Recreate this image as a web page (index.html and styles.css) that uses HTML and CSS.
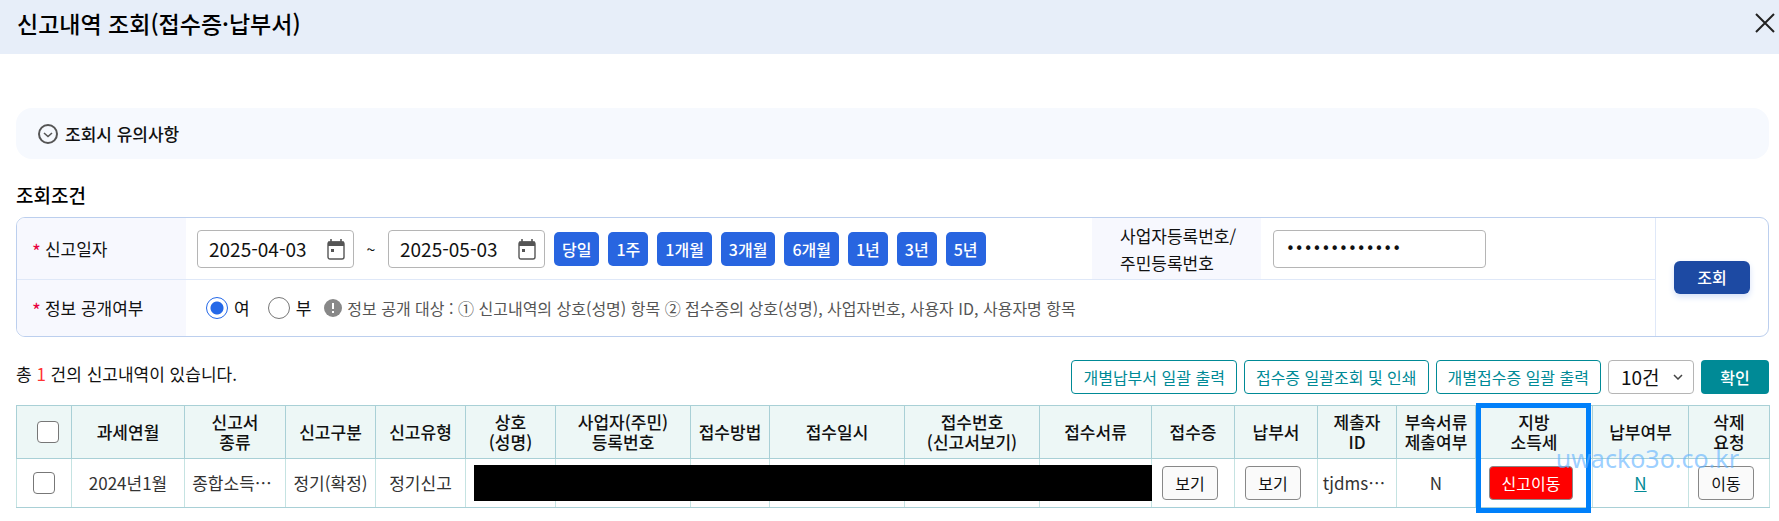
FILE: index.html
```html
<!DOCTYPE html>
<html lang="ko">
<head>
  <meta charset="UTF-8">
  <meta name="viewport" content="width=device-width, initial-scale=1.0">
  <title>신고내역 조회(접수증·납부서)</title>
  <link rel="stylesheet" href="styles.css">
</head>
<body>
  <header class="popup-header">
    <h1>신고내역 조회(접수증·납부서)</h1>
    <button type="button" class="close" aria-label="닫기">
      <svg width="20" height="20" viewBox="0 0 20 20"><path d="M1 1L19 19M19 1L1 19" fill="none" stroke="#222" stroke-width="2"/></svg>
    </button>
  </header>

  <main class="content">
    <button type="button" class="notice">
      <svg width="20" height="20" viewBox="0 0 20 20" fill="none" stroke="#555" stroke-width="2"><circle cx="10" cy="10" r="9"/><path d="M6 9l4 3.5L14 9" stroke-width="1.6"/></svg>
      조회시 유의사항
    </button>

    <h2>조회조건</h2>
    <form class="search">
      <div class="search-rows">
        <div class="search-row">
          <label class="search-label" for="dateFrom"><span class="required">*</span>신고일자</label>
          <div class="search-field">
            <div class="date">
              <input type="text" id="dateFrom" value="2025-04-03">
              <button type="button" aria-label="시작일 선택">
                <svg width="18" height="21" viewBox="0 0 18 21"><path d="M4 0v4M14 0v4" stroke="#555" stroke-width="1.6"/><rect x="1" y="3" width="16" height="17" rx="2" fill="none" stroke="#555" stroke-width="1.4"/><path d="M1 2.5h16V7H1z" fill="#555"/><path d="M4 10h3v3H4z" fill="#555"/></svg>
              </button>
            </div>
            <span class="tilde">~</span>
            <div class="date">
              <input type="text" id="dateTo" value="2025-05-03" aria-label="종료일">
              <button type="button" aria-label="종료일 선택">
                <svg width="18" height="21" viewBox="0 0 18 21"><path d="M4 0v4M14 0v4" stroke="#555" stroke-width="1.6"/><rect x="1" y="3" width="16" height="17" rx="2" fill="none" stroke="#555" stroke-width="1.4"/><path d="M1 2.5h16V7H1z" fill="#555"/><path d="M4 10h3v3H4z" fill="#555"/></svg>
              </button>
            </div>
            <div class="periods">
              <button type="button">당일</button>
              <button type="button">1주</button>
              <button type="button">1개월</button>
              <button type="button">3개월</button>
              <button type="button">6개월</button>
              <button type="button">1년</button>
              <button type="button">3년</button>
              <button type="button">5년</button>
            </div>
          </div>
          <label class="search-label number-label" for="bizNo">사업자등록번호/<br>주민등록번호</label>
          <div class="number-field">
            <input type="password" id="bizNo" value="1234567890123">
          </div>
        </div>
        <div class="search-row">
          <div class="search-label" id="openLabel"><span class="required">*</span>정보 공개여부</div>
          <div class="search-field open-field" role="radiogroup" aria-labelledby="openLabel">
            <label class="radio"><input type="radio" name="open" checked>여</label>
            <label class="radio"><input type="radio" name="open">부</label>
            <p class="info">
              <svg width="18" height="18" viewBox="0 0 18 18"><circle cx="9" cy="9" r="9" fill="#888"/><path d="M8 4h2v6H8zM8 12h2v2H8z" fill="#fff"/></svg>
              정보 공개 대상 : ① 신고내역의 상호(성명) 항목 ② 접수증의 상호(성명), 사업자번호, 사용자 ID, 사용자명 항목
            </p>
          </div>
        </div>
      </div>
      <div class="search-submit">
        <button type="button">조회</button>
      </div>
    </form>

    <div class="toolbar">
      <p class="total">총 <span>1</span> 건의 신고내역이 있습니다.</p>
      <div class="actions">
        <button type="button" class="outline">개별납부서 일괄 출력</button>
        <button type="button" class="outline">접수증 일괄조회 및 인쇄</button>
        <button type="button" class="outline">개별접수증 일괄 출력</button>
        <div class="page-size">
          <select aria-label="페이지당 건수">
            <option>10건</option>
            <option>30건</option>
            <option>50건</option>
          </select>
          <svg width="10" height="6" viewBox="0 0 10 6"><path d="M1 1l4 4 4-4" fill="none" stroke="#444" stroke-width="1.5"/></svg>
        </div>
        <button type="button" class="confirm">확인</button>
      </div>
    </div>

    <div class="result">
      <table>
        <colgroup>
          <col class="w-check"><col class="w-month"><col class="w-kind"><col class="w-type"><col class="w-type"><col class="w-type">
          <col class="w-wide"><col class="w-small"><col class="w-wide"><col class="w-wide"><col class="w-doc"><col class="w-view"><col class="w-view">
          <col class="w-small"><col class="w-small"><col class="w-local"><col class="w-paid"><col class="w-delete">
        </colgroup>
        <thead>
          <tr>
            <th class="check-all"><input type="checkbox" aria-label="전체 선택"></th>
            <th>과세연월</th>
            <th>신고서<br>종류</th>
            <th>신고구분</th>
            <th>신고유형</th>
            <th>상호<br>(성명)</th>
            <th>사업자(주민)<br>등록번호</th>
            <th>접수방법</th>
            <th>접수일시</th>
            <th>접수번호<br>(신고서보기)</th>
            <th>접수서류</th>
            <th>접수증</th>
            <th>납부서</th>
            <th>제출자<br>ID</th>
            <th>부속서류<br>제출여부</th>
            <th>지방<br>소득세</th>
            <th>납부여부</th>
            <th>삭제<br>요청</th>
          </tr>
        </thead>
        <tbody>
          <tr>
            <td><input type="checkbox" aria-label="선택"></td>
            <td>2024년1월</td>
            <td class="tight">종합소득⋯</td>
            <td>정기(확정)</td>
            <td>정기신고</td>
            <td></td>
            <td></td>
            <td></td>
            <td></td>
            <td></td>
            <td></td>
            <td class="tight"><button type="button" class="cell-btn">보기</button></td>
            <td class="tight"><button type="button" class="cell-btn">보기</button></td>
            <td class="tight">tjdms⋯</td>
            <td>N</td>
            <td class="tight"><button type="button" class="cell-btn move">신고이동</button></td>
            <td><a href="#">N</a></td>
            <td class="tight"><button type="button" class="cell-btn">이동</button></td>
          </tr>
        </tbody>
      </table>
      <div class="mask"></div>
      <div class="highlight"></div>
      <div class="watermark">uwacko3o.co.kr</div>
    </div>
  </main>
</body>
</html>
```

FILE: styles.css
```css
* {
  box-sizing: border-box;
}
body {
  margin: 0;
  font-family: "Noto Sans CJK KR", sans-serif;
  font-size: 16px;
  line-height: 20px;
  color: #111;
  background: #fff;
}
h1, h2, p {
  margin: 0;
}
button, input, select {
  font: inherit;
  color: inherit;
  margin: 0;
}
button {
  cursor: pointer;
}
svg {
  display: block;
  flex: none;
}

.popup-header {
  display: flex;
  justify-content: space-between;
  align-items: center;
  height: 54px;
  padding: 0 4px 8px 17px;
  background: #e7eef9;
}
h1 {
  font-size: 23px;
  font-weight: 500;
  line-height: 32px;
  color: #000;
}
.close {
  padding: 0;
  border: 0;
  background: none;
}

.content {
  padding: 54px 10px 12px 16px;
}
.notice {
  display: flex;
  align-items: center;
  gap: 7px;
  width: 100%;
  height: 51px;
  padding: 0 22px;
  border: 0;
  border-radius: 16px;
  background: #f6f9fe;
  font-size: 17px;
  font-weight: 500;
}
h2 {
  margin: 24px 0 10px;
  font-size: 19px;
  font-weight: 500;
  line-height: 24px;
  color: #000;
}

/* search panel */
.search {
  display: flex;
  border: 1px solid #bccfee;
  border-radius: 9px;
  overflow: hidden;
}
.search-rows {
  flex: 1;
  border-right: 1px solid #dfe8f8;
}
.search-row {
  display: flex;
  height: 61px;
}
.search-row + .search-row {
  height: 57px;
  border-top: 1px solid #dfe8f8;
}
.search-label {
  display: flex;
  align-items: center;
  gap: 4px;
  width: 169px;
  padding-left: 15px;
  background: #f7f8fe;
  font-size: 17px;
}
.required {
  padding-top: 4px;
  font-size: 19px;
  color: #e8003d;
}
.search-field {
  display: flex;
  flex: 1;
  align-items: center;
  padding-left: 11px;
}
.date {
  position: relative;
}
.date input {
  display: block;
  width: 157px;
  height: 38px;
  padding: 0 40px 0 11px;
  border: 1px solid #b5b5b5;
  border-radius: 4px;
  font-size: 19px;
}
.date button {
  position: absolute;
  top: 9px;
  right: 9px;
  padding: 0;
  border: 0;
  background: none;
}
.tilde {
  width: 34px;
  text-align: center;
}
.periods {
  display: flex;
  gap: 9px;
  margin-left: 9px;
}
.periods button {
  height: 34px;
  padding: 0 8px;
  border: 0;
  border-radius: 5px;
  background: #2865e0;
  color: #fff;
  font-weight: 500;
}
.number-label {
  padding-left: 28px;
  line-height: 27px;
}
.number-field {
  display: flex;
  align-items: center;
  width: 394px;
  padding-left: 12px;
}
.number-field input {
  width: 213px;
  height: 38px;
  padding: 0 12px;
  border: 1px solid #b5b5b5;
  border-radius: 4px;
  font-family: "DejaVu Sans", sans-serif;
  font-size: 15px;
}
.open-field {
  padding-left: 20px;
}
.radio {
  display: flex;
  align-items: center;
  gap: 6px;
  margin-right: 18px;
  font-size: 17px;
}
.radio input {
  appearance: none;
  width: 22px;
  height: 22px;
  border: 1px solid #777;
  border-radius: 50%;
  background: #fff;
}
.radio input:checked {
  border-color: #2468e8;
  background: radial-gradient(circle, #2468e8 6px, #fff 7px);
}
.radio + .info {
  margin-left: -5px;
}
.info {
  display: flex;
  align-items: center;
  gap: 5px;
  color: #555;
}
.search-submit {
  display: flex;
  align-items: center;
  justify-content: center;
  width: 112px;
}
.search-submit button {
  width: 76px;
  height: 33px;
  padding: 0;
  border: 0;
  border-radius: 6px;
  background: #1d4aa3;
  color: #fff;
  font-weight: 500;
  box-shadow: 0 3px 6px #d5e0f8;
}

/* result toolbar */
.toolbar {
  display: flex;
  justify-content: space-between;
  margin: 23px 0 11px;
}
.total {
  padding-top: 4px;
  font-size: 17px;
}
.total span {
  color: #f33;
}
.actions {
  display: flex;
  gap: 7px;
}
.outline {
  height: 34px;
  padding: 0 11px;
  border: 1px solid #008a96;
  border-radius: 4px;
  background: #fff;
  color: #008a96;
}
.page-size {
  position: relative;
}
.page-size select {
  appearance: none;
  width: 86px;
  height: 34px;
  padding: 0 12px;
  border: 1px solid #b5b5b5;
  border-radius: 4px;
  background: #fff;
  font-size: 19px;
}
.page-size svg {
  position: absolute;
  top: 14px;
  right: 11px;
  pointer-events: none;
}
.confirm {
  width: 68px;
  height: 34px;
  padding: 0;
  border: 0;
  border-radius: 4px;
  background: #008a96;
  color: #fff;
  font-weight: 500;
}

/* result table */
.result {
  position: relative;
}
table {
  width: 100%;
  table-layout: fixed;
  border-collapse: collapse;
  border: 1px solid #a9d0d6;
  font-size: 17px;
  text-align: center;
}
th {
  height: 53px;
  padding: 0;
  border: 1px solid #a9d0d6;
  background: #edf7f6;
  font-weight: 500;
  white-space: nowrap;
}
td {
  height: 49px;
  padding: 0;
  border: 1px solid #c5e3e2;
  border-bottom-color: #a9d0d6;
  color: #333;
  white-space: nowrap;
}
.tight {
  padding-right: 6px;
}
.w-check { width: 55px; }
.w-month { width: 113px; }
.w-kind { width: 101px; }
.w-type { width: 90px; }
.w-wide { width: 135px; }
.w-small { width: 79px; }
.w-doc { width: 112px; }
.w-view { width: 83px; }
.w-local { width: 117px; }
.w-paid { width: 96px; }
.w-delete { width: 81px; }
input[type="checkbox"] {
  appearance: none;
  display: block;
  width: 22px;
  height: 22px;
  margin: 0 auto;
  border: 1px solid #777;
  border-radius: 4px;
  background: #fff;
}
.check-all {
  padding-left: 7px;
}
td a {
  color: #008a96;
}
.cell-btn {
  height: 34px;
  padding: 0 12px;
  border: 1px solid #888;
  border-radius: 4px;
  background: #fafafa;
  color: #111;
  font-size: 16px;
}
.move {
  background: #f00;
  color: #fff;
}
.mask {
  position: absolute;
  top: 60px;
  left: 458px;
  width: 678px;
  height: 36px;
  background: #000;
}
.highlight {
  position: absolute;
  top: -2px;
  right: 178px;
  width: 115px;
  height: 110px;
  border: 5px solid #0080fa;
}
.watermark {
  position: absolute;
  top: 37px;
  right: 30px;
  font-family: "Noto Sans", sans-serif;
  font-size: 25px;
  line-height: 32px;
  color: rgba(100, 180, 255, 0.65);
}
```
